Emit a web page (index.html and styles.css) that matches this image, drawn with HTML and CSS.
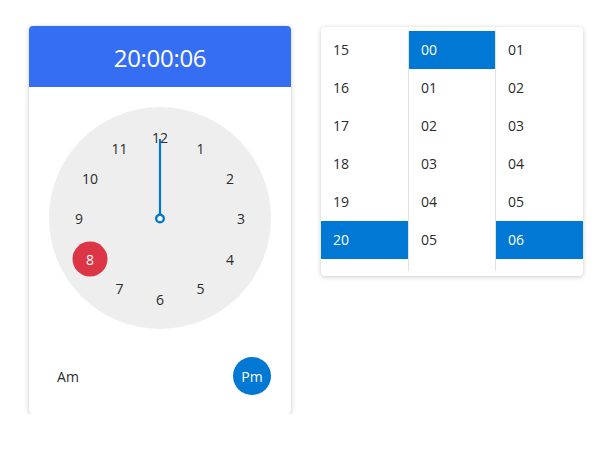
FILE: index.html
```html
<!DOCTYPE html>
<html lang="en">
<head>
<meta charset="utf-8">
<title>Time picker</title>
<link rel="stylesheet" href="styles.css">
</head>
<body>
<div class="page">
  <div class="card clock-card">
    <div class="clock-header">20:00:06</div>
    <div class="clock-body">
      <div class="face">
        <svg class="hand" width="222" height="222" viewBox="0 0 222 222">
          <line x1="111" y1="107" x2="111" y2="32" stroke="#0078d4" stroke-width="2.2"/>
          <circle cx="111" cy="111.5" r="3.8" fill="#ffffff" stroke="#0078d4" stroke-width="2.4"/>
        </svg>
        <span class="num" style="left:111px;top:30px">12</span>
        <span class="num" style="left:151.5px;top:40.9px">1</span>
        <span class="num" style="left:181.1px;top:70.5px">2</span>
        <span class="num" style="left:192px;top:111px">3</span>
        <span class="num" style="left:181.1px;top:151.5px">4</span>
        <span class="num" style="left:151.5px;top:181.1px">5</span>
        <span class="num" style="left:111px;top:192px">6</span>
        <span class="num" style="left:70.5px;top:181.1px">7</span>
        <span class="num selected" style="left:40.9px;top:151.5px">8</span>
        <span class="num" style="left:30px;top:111px">9</span>
        <span class="num" style="left:40.9px;top:70.5px">10</span>
        <span class="num" style="left:70.5px;top:40.9px">11</span>
      </div>
      <div class="ampm">
        <button class="period">Am</button>
        <button class="period active">Pm</button>
      </div>
    </div>
  </div>

  <div class="card list-card">
    <div class="col">
      <div class="item">15</div>
      <div class="item">16</div>
      <div class="item">17</div>
      <div class="item">18</div>
      <div class="item">19</div>
      <div class="item active">20</div>
    </div>
    <div class="col">
      <div class="item active">00</div>
      <div class="item">01</div>
      <div class="item">02</div>
      <div class="item">03</div>
      <div class="item">04</div>
      <div class="item">05</div>
    </div>
    <div class="col">
      <div class="item">01</div>
      <div class="item">02</div>
      <div class="item">03</div>
      <div class="item">04</div>
      <div class="item">05</div>
      <div class="item active">06</div>
    </div>
  </div>
</div>
</body>
</html>
```

FILE: styles.css
```css
* {
  box-sizing: border-box;
}

html, body {
  margin: 0;
  padding: 0;
  background: #ffffff;
}

body {
  font-family: "Segoe UI", "Open Sans", "Noto Sans", sans-serif;
  color: #2b2b2b;
  font-size: 14px;
}

.page {
  display: flex;
  align-items: flex-start;
  gap: 30px;
  padding: 26px 0 0 29px;
}

.card {
  background: #ffffff;
  border-radius: 4px;
  box-shadow: 0 1px 5px rgba(0, 0, 0, 0.2), 0 0 1px rgba(0, 0, 0, 0.1);
  overflow: hidden;
}

.clock-card {
  width: 262px;
  height: 388px;
  display: flex;
  flex-direction: column;
}

.clock-header {
  height: 61px;
  background: #356ef2;
  color: #ffffff;
  font-size: 24px;
  display: flex;
  align-items: center;
  justify-content: center;
  letter-spacing: -0.3px;
  padding-top: 1px;
}

.clock-body {
  display: flex;
  flex-direction: column;
  align-items: center;
  padding-top: 20px;
}

.face {
  position: relative;
  width: 222px;
  height: 222px;
  border-radius: 50%;
  background: #eeeeee;
}

.hand {
  position: absolute;
  left: 0;
  top: 0;
  z-index: 2;
}

.num {
  position: absolute;
  transform: translate(-50%, -50%);
  width: 35px;
  height: 35px;
  line-height: 36px;
  text-align: center;
  font-size: 14px;
  color: #2b2b2b;
  z-index: 1;
}

.num.selected {
  background: #dc3545;
  color: #ffffff;
  border-radius: 50%;
}

.ampm {
  width: 100%;
  display: flex;
  justify-content: space-between;
  padding: 28px 20px 0 20px;
}

.period {
  width: 38px;
  height: 38px;
  border: none;
  border-radius: 50%;
  background: transparent;
  font-family: inherit;
  font-size: 14px;
  color: #2b2b2b;
  padding: 0;
}

.period.active {
  background: #0078d4;
  color: #ffffff;
}

.list-card {
  width: 262px;
  margin-top: 1px;
  padding: 4px 0 5px 0;
  display: grid;
  grid-template-columns: 87px 87px 88px;
}

.col {
  height: 240px;
  overflow: hidden;
}

.col + .col {
  border-left: 1px solid #e3e3e3;
}

.item {
  height: 38px;
  line-height: 38px;
  padding-left: 12px;
  color: #2b2b2b;
}

.item.active {
  background: #0078d4;
  color: #ffffff;
}
```
